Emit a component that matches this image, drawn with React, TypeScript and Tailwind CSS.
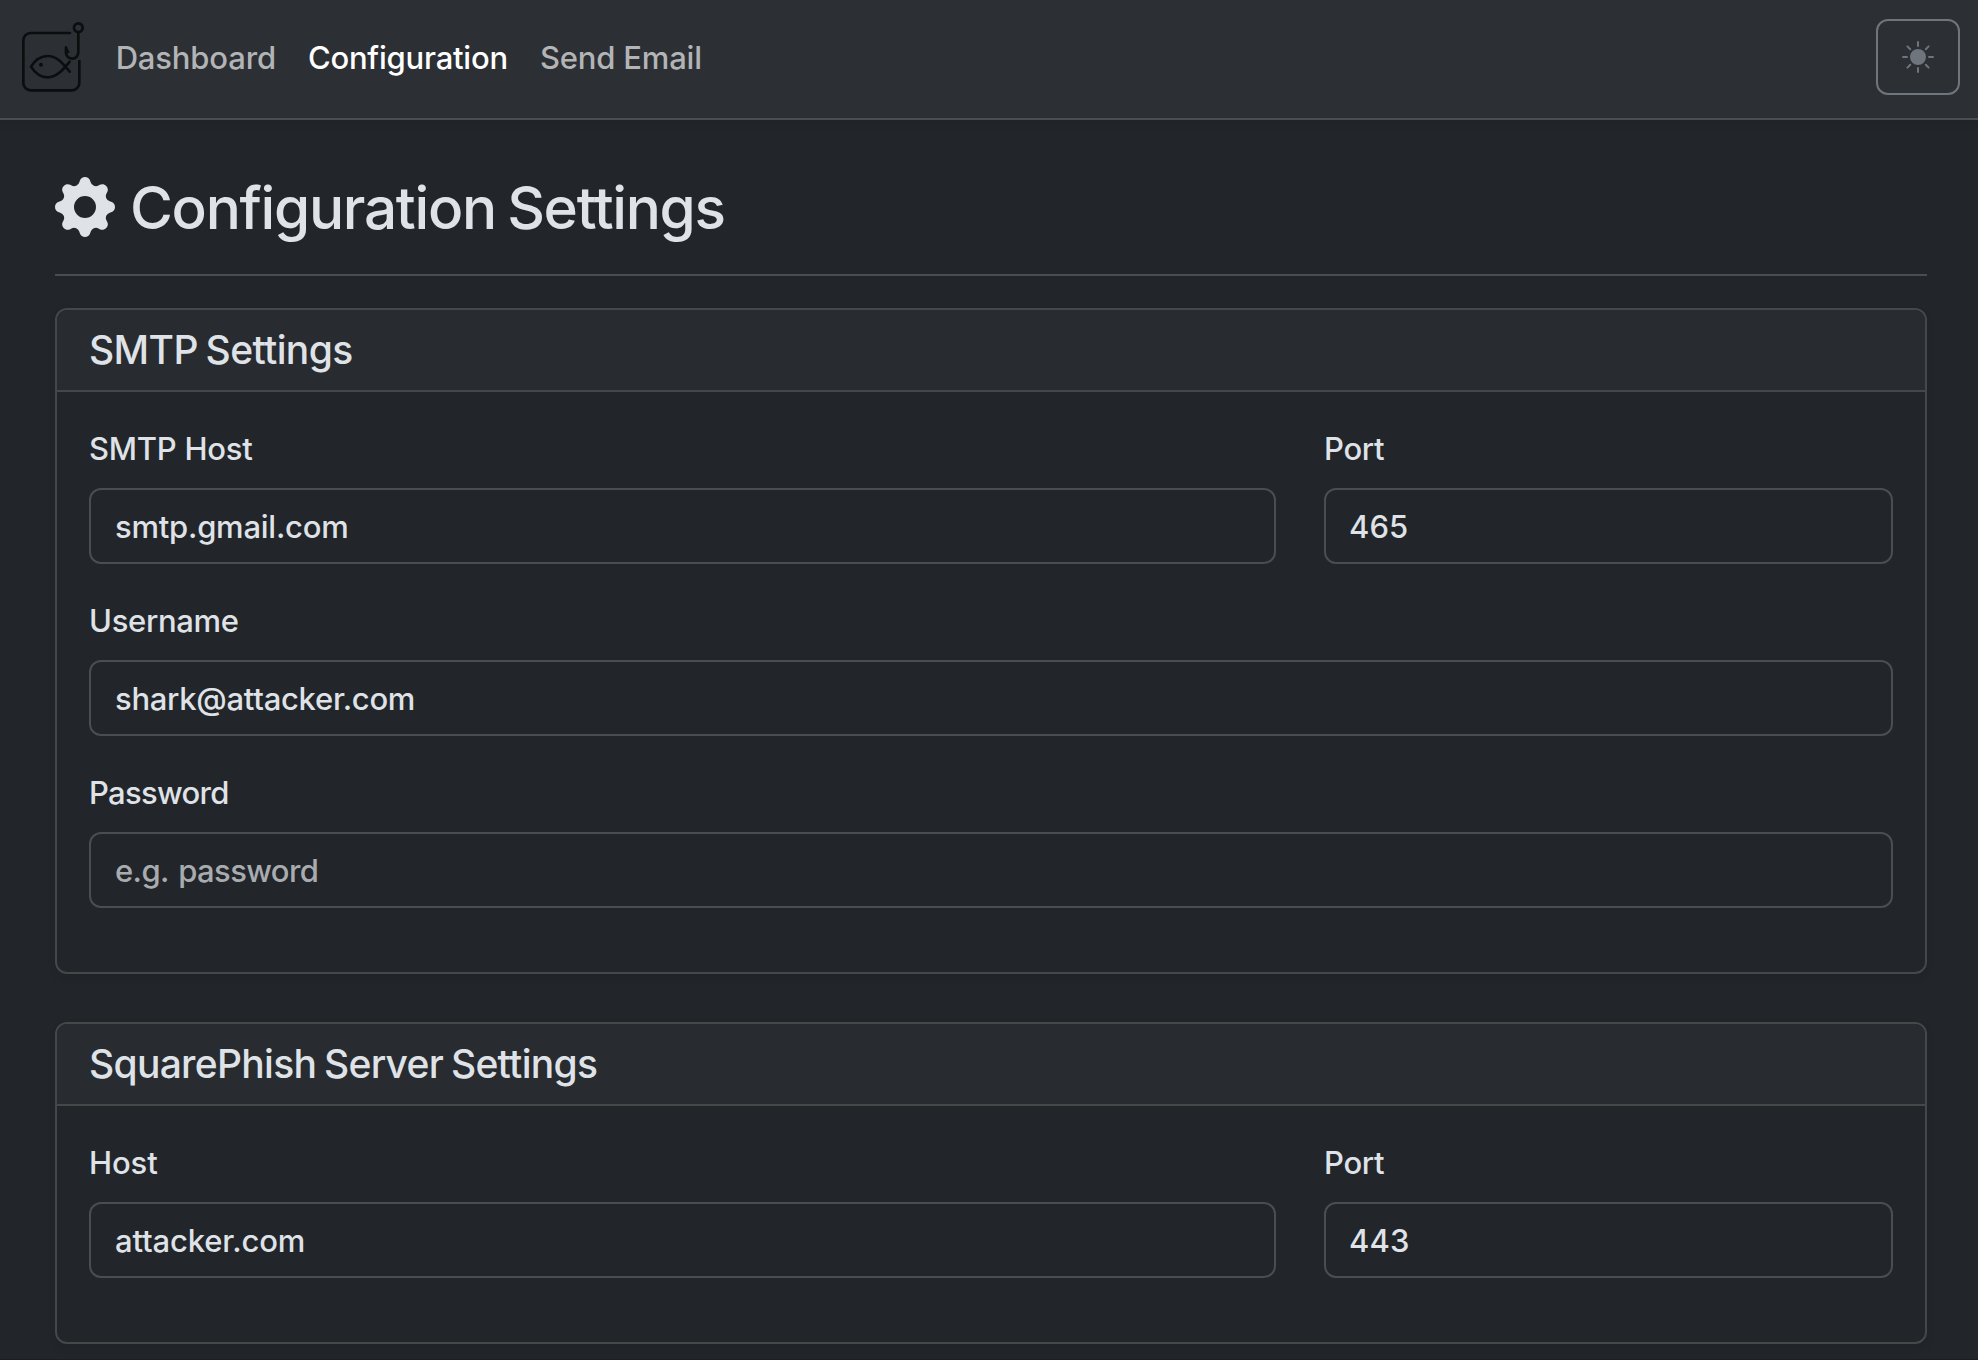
import { useState } from "react";
import type { ReactNode } from "react";
import { BsGearFill, BsSunFill } from "react-icons/bs";

function Logo() {
  return (
    <svg
      viewBox="60 60 200 222"
      className="h-[74px] w-[66.67px] shrink-0"
      fill="none"
      stroke="#0c0d0e"
      strokeWidth="8"
      strokeLinecap="round"
      strokeLinejoin="round"
    >
      <path d="M210 99H92a22 22 0 0 0-22 22v128a22 22 0 0 0 22 22h124a22 22 0 0 0 22-22v-66" />
      <circle cx="235" cy="83" r="13" />
      <path d="M235 97v58a18.500 19 0 0 1-37 4v-16" />
      <path d="M197 140l10 17h-9z" fill="#0c0d0e" strokeWidth="4" />
      <path d="M209 185c-20 24-38 47-66 47-22 0-40-16-50-32 10-16 28-32 50-32 28 0 46 23 66 47" />
      <circle cx="123" cy="194" r="6" fill="#0c0d0e" stroke="none" />
    </svg>
  );
}

function Card({ title, children }: { title: ReactNode; children: ReactNode }) {
  return (
    <section className="rounded-xl border-2 border-[#464749] shadow-[0_4px_8px_rgba(0,0,0,0.075)]">
      <header className="rounded-t-[10px] border-b-2 border-[#464749] bg-[#282b2f] px-8 py-4">
        {title}
      </header>
      <div className="p-8">{children}</div>
    </section>
  );
}

type FieldProps = {
  id: string;
  label: string;
  initial?: string;
  placeholder?: string;
  labelClass?: string;
  inputClass?: string;
};

function Field({ id, label, initial = "", placeholder, labelClass = "", inputClass = "" }: FieldProps) {
  const [value, setValue] = useState(initial);
  return (
    <div className="mb-8 pt-px">
      <label htmlFor={id} className={`mb-[15px] block leading-[48px] ${labelClass}`}>
        {label}
      </label>
      <input
        id={id}
        value={value}
        placeholder={placeholder}
        onChange={(e) => setValue(e.target.value)}
        className={`block h-[76px] w-full rounded-xl border-2 border-[#4a4d51] bg-[#22252a] px-6 outline-none placeholder:text-[#a9acaf] ${inputClass}`}
      />
    </div>
  );
}

export default function App() {
  return (
    <div className="h-[1360px] overflow-hidden border-b border-[#1f1c20] bg-[#22252a] font-['Inter','Liberation_Sans',sans-serif] text-[31px] font-[460] text-[#dfe2e6]">
      <nav className="flex h-[120px] items-start justify-between border-b-2 border-[#4a4d51] bg-[#2c2f34] pr-[18px] pl-5 shadow-[0_4px_8px_rgba(0,0,0,0.075)]">
        <div className="flex items-start">
          <div className="pt-5">
            <Logo />
          </div>
          <div className="flex gap-8 pt-[34px] pl-[29px] leading-[48px] text-[#b2b4b6]">
            <a href="#" className="tracking-[-0.16px]">Dashboard</a>
            <a href="#" className="tracking-[-0.22px] text-white">Configuration</a>
            <a href="#" className="tracking-[-0.18px]">Send Email</a>
          </div>
        </div>
        <button className="mt-[19px] flex h-[76px] w-[84px] items-center justify-center rounded-xl border-2 border-[#6e757c] text-[#6e757c]">
          <BsSunFill className="size-8" />
        </button>
      </nav>
      <main className="pr-[51px] pl-[55px]">
        <h1 className="flex items-center gap-[15px] pt-[52px] text-[58.5px] leading-[72px] font-[540] tracking-[-1.3px] [word-spacing:-3px]">
          <BsGearFill className="size-[60px]" />
          <span className="-mb-0.5">Configuration Settings</span>
        </h1>
        <hr className="mt-8 mb-8 border-t-2 border-[#4a4d51]" />
        <div className="flex flex-col gap-12">
          <Card title={<h2 className="text-[39px] leading-[48px] font-[540] tracking-[-0.62px] [word-spacing:-2px]">SMTP Settings</h2>}>
            <div className="grid grid-cols-[1187px_569px] gap-x-12">
              <Field id="smtp-host" label="SMTP Host" initial="smtp.gmail.com" labelClass="tracking-[-0.26px]" inputClass="tracking-[-0.24px]" />
              <Field id="smtp-port" label="Port" initial="465" labelClass="tracking-[-0.3px]" inputClass="tracking-[0.1px] indent-[-1px]" />
            </div>
            <Field id="username" label="Username" initial="shark@attacker.com" labelClass="tracking-[-0.32px]" inputClass="tracking-[-0.28px]" />
            <Field id="password" label="Password" placeholder="e.g. password" labelClass="tracking-[-0.7px]" inputClass="tracking-[-0.6px] [word-spacing:2px]" />
          </Card>
          <Card title={<h2 className="text-[39px] leading-[48px] font-[540] tracking-[-0.7px] [word-spacing:-2px]">SquarePhish Server Settings</h2>}>
            <div className="grid grid-cols-[1187px_569px] gap-x-12">
              <Field id="server-host" label="Host" initial="attacker.com" labelClass="tracking-[-0.1px]" inputClass="tracking-[-0.14px]" />
              <Field id="server-port" label="Port" initial="443" labelClass="tracking-[-0.3px]" inputClass="tracking-[0.1px] indent-[-1px]" />
            </div>
          </Card>
        </div>
      </main>
    </div>
  );
}
